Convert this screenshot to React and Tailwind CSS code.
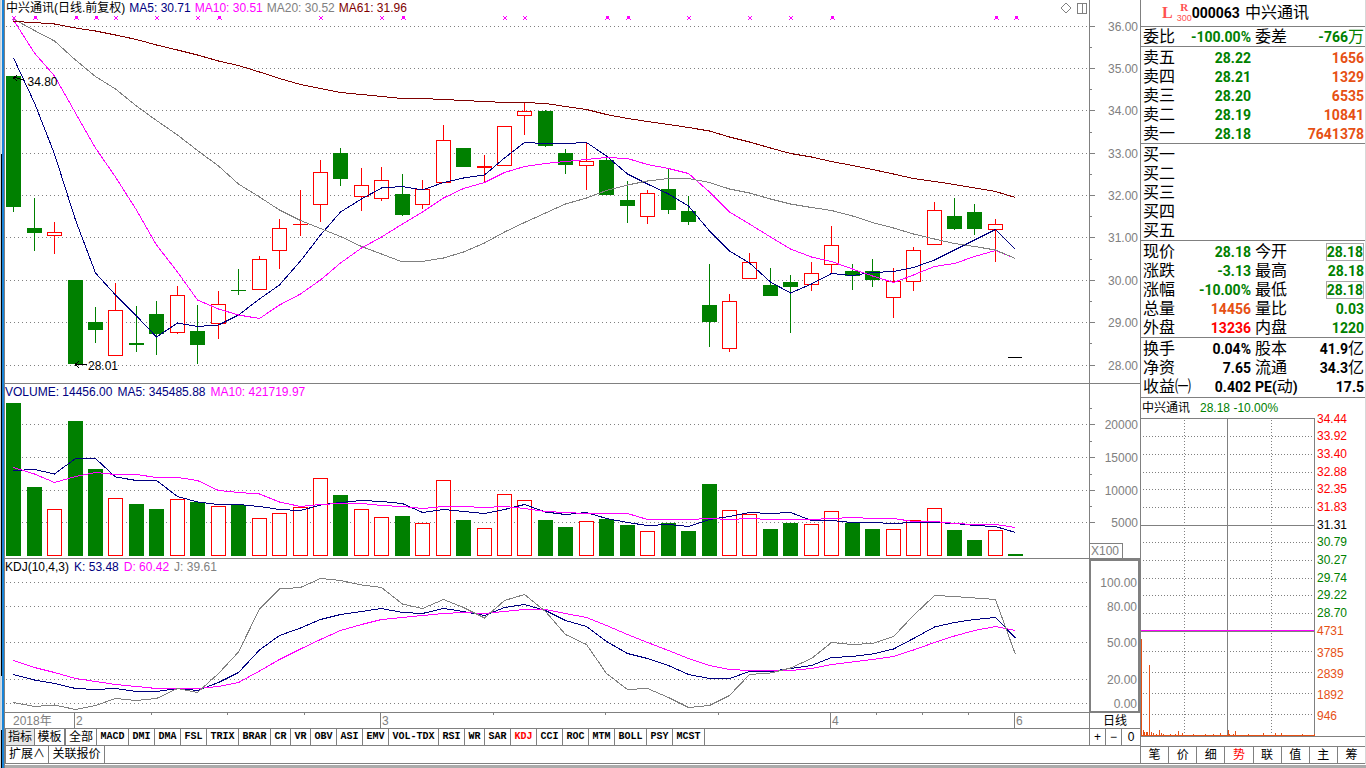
import React from "react";

/* ---------- data ---------- */

const STEP = 20.452;
const xAt = (i) => Math.floor(13.68 + STEP * i);

// [direction, body top, body bottom, high, low]
const CANDLES = [
  ["d", 76, 207, 76, 212], ["d", 228, 233, 198, 251], ["u", 232, 236, 222, 254], ["d", 280, 364, 280, 364],
  ["d", 322, 330, 307, 343], ["u", 310, 356, 283, 356], ["d", 343, 345, 306, 352], ["d", 314, 334, 301, 355],
  ["u", 295, 333, 286, 334], ["d", 331, 345, 305, 364], ["u", 304, 324, 291, 339], ["d", 290, 291, 269, 295],
  ["u", 259, 290, 256, 290], ["u", 228, 251, 219, 269], ["u", 224, 225, 190, 236], ["u", 172, 205, 160, 222],
  ["d", 153, 179, 148, 186], ["u", 185, 197, 168, 211], ["u", 180, 199, 167, 201], ["d", 194, 215, 174, 216],
  ["u", 189, 205, 180, 209], ["u", 140, 183, 125, 183], ["d", 148, 167, 148, 167], ["u", 166, 168, 155, 182],
  ["u", 126, 166, 126, 166], ["u", 111, 116, 102, 135], ["d", 111, 146, 110, 147], ["d", 153, 165, 149, 174],
  ["u", 161, 166, 143, 190], ["d", 160, 195, 156, 195], ["d", 200, 206, 181, 223], ["u", 193, 217, 190, 224],
  ["d", 189, 210, 169, 214], ["d", 211, 222, 196, 225], ["d", 305, 322, 264, 347], ["u", 301, 349, 294, 352],
  ["u", 262, 279, 253, 279], ["d", 285, 296, 268, 296], ["d", 282, 287, 275, 333], ["u", 273, 285, 262, 291],
  ["u", 245, 265, 226, 274], ["d", 271, 276, 264, 290], ["d", 271, 280, 259, 287], ["u", 281, 298, 268, 318],
  ["u", 250, 282, 247, 291], ["u", 210, 245, 202, 245], ["d", 216, 229, 198, 230], ["d", 212, 229, 204, 235],
  ["u", 224, 230, 219, 262], ["flat", 357, 358, 357, 358],
];

const VOLUME_TOPS = [
  403, 487, 509, 421, 469, 498, 504, 509, 499, 502, 506, 505, 518, 513, 507, 478, 495, 509, 517, 516,
  523, 480, 520, 528, 494, 500, 520, 527, 521, 519, 525, 531, 523, 531, 484, 510, 514, 529, 523, 524,
  511, 523, 529, 529, 520, 508, 530, 540, 530, 554,
];

const MA5 = [58, 103, 154, 220, 273, 295, 316, 337, 323, 326.5, 325, 315, 299, 285, 261, 235, 212, 199, 188, 186.5, 190, 182.5, 178, 175, 158, 142.5, 143.5, 143.5, 142.5, 156, 174, 184, 194, 206, 231, 251, 263, 282, 293, 284, 273.5, 275.5, 272.5, 271.5, 267.5, 260, 250, 240, 229.5, 249.5];
const MA10 = [20, 53, 76, 113, 148, 177, 210, 245, 272, 300, 309, 315, 318.5, 305, 294, 280, 263, 248, 237, 224, 212, 198, 188.5, 182.5, 172.5, 166.5, 163.5, 161.5, 159.5, 157.5, 158.5, 164.5, 168.5, 173.5, 192, 212, 224, 237, 249, 257, 261.5, 269, 276, 282.5, 275, 266.5, 263.5, 256.5, 250.5, 258.5];
const MA20 = [19, 30.5, 41, 60, 76.5, 89, 106, 120.5, 135, 150.5, 166, 184, 197, 210, 220.5, 228.5, 236.5, 246.5, 254, 262, 261.5, 258, 252, 243, 232, 222.5, 213, 204, 198, 190.5, 185, 181, 178.5, 178.5, 182.5, 189, 193, 199, 204, 207.5, 210.5, 216, 222.5, 228, 234, 239, 243.5, 246.5, 250, 258.5];
const MA61 = [21.5, 22.5, 24, 28, 31, 35, 39.5, 45, 50, 55, 61, 65.5, 72, 78.5, 84.5, 88.5, 92.5, 94.5, 96.5, 98.5, 98.5, 99.5, 100.5, 101.5, 102.5, 102.5, 103.5, 106.5, 109.5, 114.5, 118.5, 121.5, 124.5, 127.5, 131, 137, 142, 148, 153.5, 157, 161.5, 165.5, 169.5, 174, 178.5, 181.5, 184.5, 188, 191.5, 197.5];

const VMA5 = [470.5, 469.5, 474, 458.5, 458.5, 477, 480.5, 480.5, 496.5, 502, 504.5, 504.5, 506.5, 509.5, 510.5, 505, 502.5, 500.5, 501.5, 503.5, 512.5, 509.5, 511.5, 513.5, 509.5, 504.5, 512, 514.5, 512.5, 518.5, 522.5, 525.5, 524.5, 526.5, 519.5, 516.5, 512.5, 513.5, 512.5, 520.5, 520.5, 522.5, 522.5, 523.5, 522.5, 522.5, 523.5, 525.5, 526.5, 532.5];
const VMA10 = [467.5, 474, 482.5, 476.5, 472.5, 474.5, 474.5, 477.5, 477.5, 480.5, 490.5, 492.5, 494, 502, 506.5, 504.5, 503.5, 503.5, 505.5, 506.5, 508.5, 506.5, 506.5, 507.5, 506.5, 508.5, 511.5, 512.5, 513.5, 513.5, 513.5, 519.5, 519.5, 519.5, 518.5, 519.5, 518.5, 519.5, 519.5, 519.5, 518.5, 517.5, 518.5, 518.5, 521.5, 521.5, 523.5, 524.5, 524.5, 527.5];

const LINE_K = [674.5, 680, 683.5, 688.5, 689.5, 688.5, 691.5, 691.5, 688.5, 690.5, 682.5, 672.5, 650, 635.5, 628, 619.5, 614.5, 611.5, 608.5, 612.5, 613.5, 608.5, 611.5, 615.5, 607.5, 604.5, 610.5, 620.5, 626.5, 641.5, 653.5, 658.5, 665.5, 674.5, 678.5, 678.5, 671.5, 671.5, 668.5, 665.5, 657.5, 656.5, 654, 649, 638.5, 627, 622.5, 619.5, 617.5, 638];
const LINE_D = [660.5, 667.5, 672.5, 678.5, 681.5, 684.5, 686.5, 688.5, 688.5, 688.5, 686.5, 682.5, 671, 659.5, 649, 639.5, 630.5, 624.5, 619.5, 617.5, 615.5, 613.5, 612.5, 613.5, 611.5, 609.5, 609.5, 613.5, 617.5, 625.5, 634.5, 642.5, 650.5, 658.5, 665.5, 669.5, 670.5, 670.5, 670.5, 668.5, 664.5, 662, 659.5, 656.5, 650, 642.5, 636, 630.5, 626.5, 630.5];
const LINE_J = [702.5, 706.5, 705, 709.5, 705.5, 698.5, 700.5, 698.5, 688.5, 692.5, 673.5, 652, 609, 589, 587.5, 578.5, 580.5, 585, 587.5, 604, 608.5, 599.5, 607.5, 618, 600.5, 594.5, 611.5, 634.5, 644.5, 673.5, 689.5, 688.5, 697.5, 707.5, 705.5, 695.5, 674.5, 673, 668, 658.5, 642.5, 644.5, 643.5, 636.5, 615.5, 595.5, 596.5, 598, 599.5, 654.5];

const SMALL_MARKS = [0, 5, 7, 9, 15, 18, 24, 25, 33, 36, 38];
const LARGE_MARKS = [1, 3, 4, 10, 19, 29, 30, 40, 48, 49];

const PRICE_TICKS = [
  [26, "36.00"], [68, "35.00"], [110, "34.00"], [153, "33.00"], [195, "32.00"],
  [237, "31.00"], [280, "30.00"], [322, "29.00"], [365, "28.00"],
];
const VOLUME_TICKS = [[424, "20000"], [457, "15000"], [490, "10000"], [522, "5000"]];
const KDJ_TICKS = [[582, "100.00"], [606, "80.00"], [642, "50.00"], [679, "20.00"], [703, "0.00"]];

const GREEN = "#008000";
const RED = "#ff0000";
const NAVY = "#000080";
const MAGENTA = "#ff00ff";
const GRAY = "#808080";
const MAROON = "#800000";

const pct = (y, top, height) => `${((y - top) / height) * 100}%`;

/* ---------- chart pieces ---------- */

function Plot({ top, height, label, children, overlay }) {
  return (
    <svg className="block min-h-0 w-full flex-1" role="img" aria-label={label}>
      <svg
        width="100%"
        height="100%"
        viewBox={`5 ${top} 1084 ${height}`}
        preserveAspectRatio="none"
        shapeRendering="crispEdges"
      >
        {children}
      </svg>
      {overlay}
    </svg>
  );
}

function Grid({ rows }) {
  return rows.map(([y]) => (
    <line key={y} x1="6" x2="1088" y1={y + 0.5} y2={y + 0.5} stroke={GRAY} strokeDasharray="1 3" />
  ));
}

function Line({ values, color }) {
  const points = values.map((y, i) => `${xAt(i) + 0.5},${y}`).join(" ");
  return <polyline points={points} fill="none" stroke={color} strokeWidth="1" />;
}

function Bar({ x, top, bottom, up }) {
  if (up && bottom - top > 2) {
    return (
      <rect x={x - 6.5} y={top + 0.5} width="14" height={bottom - top - 1} fill="#fff" stroke={RED} />
    );
  }
  return <rect x={x - 7} y={top} width="15" height={bottom - top} fill={up ? RED : GREEN} />;
}

function Candle({ i, c: [dir, top, bottom, high, low] }) {
  const x = xAt(i);
  if (dir === "flat") return <rect x={x - 7} y={top} width="14" height="1" fill="#000" />;
  return (
    <g>
      <rect x={x} y={high} width="1" height={low - high} fill={dir === "u" ? RED : GREEN} />
      <Bar x={x} top={top} bottom={bottom} up={dir === "u"} />
    </g>
  );
}

function Mark({ x, large }) {
  return (
    <g>
      <path
        d={large ? `M${x - 1} 15l5 5m0 -5l-5 5` : `M${x - 1} 16l4 4m0 -4l-4 4`}
        stroke={MAGENTA}
        fill="none"
      />
      {large && <rect x={x} y="16" width="3" height="3" fill={MAGENTA} />}
    </g>
  );
}

function AxisScale({ ticks, top, height, minor = [], right = 48, marks = true }) {
  return (
    <svg className="block min-h-0 w-full flex-1 overflow-visible" shapeRendering="crispEdges">
      {marks && minor.map((y) => (
        <rect key={y} x="0" y={pct(y, top, height)} width="2" height="1" fill={GRAY} />
      ))}
      {ticks.map(([y, text]) => (
        <g key={y}>
          {marks && <rect x="0" y={pct(y, top, height)} width="5" height="1" fill={GRAY} />}
          <text
            x={right}
            y={pct(y, top, height)}
            dy="5"
            textAnchor="end"
            className="fill-[#808080] text-[12px]"
          >
            {text}
          </text>
        </g>
      ))}
    </svg>
  );
}

function Legend({ items, gap = "gap-[5px]", children }) {
  return (
    <header className={`${gap} flex h-4 shrink-0 items-center whitespace-nowrap text-[12px] leading-4`}>
      {items.map(([text, color]) => (
        <span key={text} className={color}>{text}</span>
      ))}
      {children}
    </header>
  );
}

function PricePanel() {
  const top = 16;
  const h = 367;
  return (
    <section className="grid min-h-0 grid-cols-[minmax(0,1fr)_51px] border-b border-[#808080]">
      <div className="flex min-h-0 flex-col">
        <Legend
          gap="gap-1"
          items={[
            ["中兴通讯(日线.前复权)", "pl-px text-black"],
            ["MA5: 30.71", "text-[#000080]"],
            ["MA10: 30.51", "text-[#ff00ff]"],
            ["MA20: 30.52", "text-[#808080]"],
            ["MA61: 31.96", "text-[#800000]"],
          ]}
        >
          <span className="flex-1" />
          <button type="button" aria-label="标记" className="h-3 w-3">
            <svg viewBox="0 0 12 12" className="block h-3 w-3">
              <path d="M6 1L11 6L6 11L1 6Z" fill="none" stroke={GRAY} />
            </svg>
          </button>
          <button type="button" aria-label="分栏" className="mr-px h-3 w-3">
            <svg viewBox="0 0 12 12" className="block h-3 w-3" shapeRendering="crispEdges">
              <path d="M1.5 1.5H10.5V11.5H1.5ZM6.5 1.5V11.5" fill="none" stroke={GRAY} />
            </svg>
          </button>
        </Legend>
        <Plot
          top={top}
          height={h}
          label="日线"
          overlay={
            <g className="text-[12px]">
              <text x={pct(27.5, 5, 1084)} y={pct(86, top, h)}>34.80</text>
              <text x={pct(88, 5, 1084)} y={pct(370, top, h)}>28.01</text>
            </g>
          }
        >
          <Grid rows={PRICE_TICKS} />
          {SMALL_MARKS.map((i) => <Mark key={i} x={xAt(i)} />)}
          {LARGE_MARKS.map((i) => <Mark key={i} x={xAt(i)} large />)}
          {CANDLES.map((c, i) => <Candle key={i} i={i} c={c} />)}
          <Line values={MA5} color={NAVY} />
          <Line values={MA10} color={MAGENTA} />
          <Line values={MA20} color={GRAY} />
          <Line values={MA61} color={MAROON} />
          <path d="M13 77.5H17M17 78.5H20M20 79.5H24M13 77.5L17 75.5M13 77.5L17 80.5" stroke="#000" fill="none" />
          <path d="M75 364.5H87M75 364.5L79 361.5M75 364.5L79 367.5" stroke="#000" fill="none" />
        </Plot>
      </div>
      <div className="flex min-h-0 flex-col border-l border-[#808080]">
        <AxisScale ticks={PRICE_TICKS} minor={[47, 89, 132, 174, 216, 259, 301, 343]} top={0} height={383} />
      </div>
    </section>
  );
}

function VolumePanel() {
  return (
    <section className="grid min-h-0 grid-cols-[minmax(0,1fr)_51px] border-b border-[#808080]">
      <div className="flex min-h-0 flex-col">
        <Legend
          items={[
            ["VOLUME: 14456.00", "text-[#000080]"],
            ["MA5: 345485.88", "text-[#000080]"],
            ["MA10: 421719.97", "text-[#ff00ff]"],
          ]}
        />
        <Plot top={400} height={158} label="成交量">
          <Grid rows={VOLUME_TICKS} />
          {VOLUME_TOPS.map((y, i) => (
            <Bar key={i} x={xAt(i)} top={y} bottom={556} up={CANDLES[i][0] === "u"} />
          ))}
          <Line values={VMA5} color={NAVY} />
          <Line values={VMA10} color={MAGENTA} />
        </Plot>
      </div>
      <div className="flex min-h-0 flex-col border-l border-[#808080]">
        <AxisScale ticks={VOLUME_TICKS} minor={[408, 441, 474, 506]} top={384} height={159} />
        <div className="h-[15px] w-[33px] border border-b-0 border-l-0 border-[#808080] pl-px text-[12px] leading-[15px] text-[#808080]">
          X100
        </div>
      </div>
    </section>
  );
}

function KdjPanel() {
  return (
    <section className="grid min-h-0 grid-cols-[minmax(0,1fr)_51px]">
      <div className="flex min-h-0 flex-col">
        <Legend
          items={[
            ["KDJ(10,4,3)", "text-black"],
            ["K: 53.48", "text-[#000080]"],
            ["D: 60.42", "text-[#ff00ff]"],
            ["J: 39.61", "text-[#808080]"],
          ]}
        />
        <Plot top={575} height={137} label="KDJ">
          <Grid rows={KDJ_TICKS} />
          <Line values={LINE_K} color={NAVY} />
          <Line values={LINE_D} color={MAGENTA} />
          <Line values={LINE_J} color={GRAY} />
        </Plot>
      </div>
      <div className="flex min-h-0 flex-col border-2 border-b border-[#808080]">
        <AxisScale ticks={KDJ_TICKS} top={561} height={150} right={46} marks={false} />
      </div>
    </section>
  );
}

function TimeAxis() {
  const months = [[74, "2"], [380, "3"], [830, "4"], [1014, "6"]];
  const ticks = [151, 227, 304, 493, 605, 718, 876, 922, 968];
  return (
    <div className="grid h-4 shrink-0 grid-cols-[minmax(0,1fr)_51px] border-t border-[#808080]">
      <svg className="block h-[15px] w-full" shapeRendering="crispEdges">
        <text x="8" y="12" className="fill-[#808080] text-[12px]">2018年</text>
        {months.map(([x, text]) => (
          <g key={x}>
            <rect x={pct(x, 5, 1084)} y="0" width="1" height="15" fill={GRAY} />
            <text x={pct(x + 2, 5, 1084)} y="12" className="fill-[#808080] text-[12px]">{text}</text>
          </g>
        ))}
        {ticks.map((x) => (
          <rect key={x} x={pct(x, 5, 1084)} y="0" width="1" height="2" fill={GRAY} />
        ))}
      </svg>
      <button type="button" className="border-l border-[#808080] text-center text-[12px] leading-[14px]">日线</button>
    </div>
  );
}

const INDICATORS = [
  ["MACD", "w-8"], ["DMI", "w-[26px]"], ["DMA", "w-[26px]"], ["FSL", "w-[26px]"], ["TRIX", "w-8"],
  ["BRAR", "w-8"], ["CR", "w-5"], ["VR", "w-5"], ["OBV", "w-[26px]"], ["ASI", "w-[26px]"],
  ["EMV", "w-[26px]"], ["VOL-TDX", "w-[50px]"], ["RSI", "w-[26px]"], ["WR", "w-5"], ["SAR", "w-[26px]"],
  ["KDJ", "w-[26px]"], ["CCI", "w-[26px]"], ["ROC", "w-[26px]"], ["MTM", "w-[26px]"], ["BOLL", "w-8"],
  ["PSY", "w-[26px]"], ["MCST", "w-8"],
];

function IndicatorBar() {
  return (
    <>
      <nav className="flex h-[17px] shrink-0 border-t border-[#808080] text-[12px] leading-4">
        <button type="button" className="w-[30px] border-x border-[#808080] bg-[#e8e8e8]">指标</button>
        <button type="button" className="w-[31px] border-r-2 border-[#808080]">模板</button>
        <button type="button" className="w-[31px] border-r border-[#808080]">全部</button>
        {INDICATORS.map(([name, width]) => (
          <button
            key={name}
            type="button"
            className={`${width} flex items-center justify-center border-r border-[#808080] font-['Liberation_Mono',monospace] text-[10px] font-bold ${
              name === "KDJ" ? "text-[#ff0000]" : "text-black"
            }`}
          >
            {name}
          </button>
        ))}
        <span className="flex-1" />
        <button type="button" aria-label="放大" className="w-4 border-l border-[#808080]">+</button>
        <button type="button" aria-label="缩小" className="w-4 border-l border-[#808080]">−</button>
        <button type="button" className="w-[19px] border-l border-[#808080]">0</button>
      </nav>
      <nav className="flex h-[19px] shrink-0 border-y border-[#808080] text-[12px] leading-[17px]">
        <button type="button" className="w-11 whitespace-nowrap border-x border-[#808080]">扩展∧</button>
        <button type="button" className="w-14 whitespace-nowrap border-r border-[#808080]">关联报价</button>
      </nav>
    </>
  );
}

/* ---------- quote panel ---------- */

const G = "text-[#008000]";
const O = "text-[#e65014]";
const R = "text-[#ff0000]";
const K = "text-black";

const SELLS = [
  ["卖五", "28.22", "1656"], ["卖四", "28.21", "1329"], ["卖三", "28.20", "6535"],
  ["卖二", "28.19", "10841"], ["卖一", "28.18", "7641378"],
];
const BUYS = [["买一", "", ""], ["买二", "", ""], ["买三", "", ""], ["买四", "", ""], ["买五", "", ""]];
const STATS = [
  ["现价", "28.18", G, "今开", "28.18", G, true],
  ["涨跌", "-3.13", G, "最高", "28.18", G],
  ["涨幅", "-10.00%", G, "最低", "28.18", G, true],
  ["总量", "14456", O, "量比", "0.03", G],
  ["外盘", "13236", R, "内盘", "1220", G],
];
const BASICS = [
  ["换手", "0.04%", K, "股本", "41.9亿", K],
  ["净资", "7.65", K, "流通", "34.3亿", K],
  ["收益㈠", "0.402", K, "PE(动)", "17.5", K],
];

const LABEL = "p-0 text-left align-middle text-[16px] font-normal leading-[18px] whitespace-nowrap";
const VALUE =
  "p-0 text-right align-middle font-[Roboto,'Noto_Sans_CJK_SC',sans-serif] text-[14px] font-bold leading-[18px] whitespace-nowrap";

function OrderTable({ rows }) {
  return (
    <table className="w-full table-fixed border-collapse">
      <tbody>
        {rows.map(([name, price, amount]) => (
          <tr key={name} className="h-[19px]">
            <th scope="row" className={`${LABEL} w-12`}>{name}</th>
            <td className={`${VALUE} ${G} w-[60px]`}>{price}</td>
            <td className={`${VALUE} ${O}`}>{amount}</td>
          </tr>
        ))}
      </tbody>
    </table>
  );
}

// "亿" and "万" are set in the thin label face, larger than the digits beside them
function Amount({ text }) {
  const m = text.match(/^(.*?)([亿万])$/);
  if (!m) return text;
  return (
    <>
      {m[1]}
      <span className="text-[16px] font-normal leading-none">{m[2]}</span>
    </>
  );
}

function StatName({ text }) {
  if (!text.startsWith("PE")) return text;
  return (
    <span className="font-[Roboto,'Noto_Sans_CJK_SC',sans-serif] text-[14px] font-bold leading-none">
      PE(<span className="text-[16px] font-normal leading-none">动</span>)
    </span>
  );
}

function StatTable({ rows }) {
  return (
    <table className="w-full table-fixed border-collapse">
      <tbody>
        {rows.map(([a, av, ac, b, bv, bc, boxed]) => (
          <tr key={a} className="h-[19px]">
            <th scope="row" className={`${LABEL} w-[46px]`}>{a}</th>
            <td className={`${VALUE} ${ac} w-[62px]`}>{av}</td>
            <th scope="row" className={`${LABEL} w-12`}>
              <span className="pl-1"><StatName text={b} /></span>
            </th>
            <td className={`${VALUE} ${bc}`}>
              {boxed ? (
                <span className="inline-block h-[18px] border border-[#a8a8a8] leading-4">{bv}</span>
              ) : (
                <Amount text={bv} />
              )}
            </td>
          </tr>
        ))}
      </tbody>
    </table>
  );
}

const MINI_LABELS = [
  [419, "34.44", RED], [436, "33.92", RED], [454, "33.40", RED], [472, "32.88", RED], [489, "32.35", RED],
  [507, "31.83", RED], [525, "31.31", "#000000"], [542, "30.79", GREEN], [560, "30.27", GREEN],
  [578, "29.74", GREEN], [595, "29.22", GREEN], [613, "28.70", GREEN],
  [631, "4731", "#e65014"], [653, "3785", "#e65014"], [674, "2839", "#e65014"], [695, "1892", "#e65014"],
  [716, "946", "#e65014"],
];
// [x, height above the base line]
const MINI_BARS = [
  [1141, 97], [1143, 6], [1144, 4], [1146, 4], [1147, 4], [1149, 71], [1151, 4], [1153, 3], [1156, 2], [1159, 6],
  [1161, 3], [1163, 2], [1170, 2], [1175, 2], [1178, 5], [1182, 3], [1193, 2], [1205, 2], [1213, 2], [1220, 3],
  [1228, 6], [1229, 2], [1233, 2], [1235, 5], [1248, 2], [1263, 3], [1275, 3], [1281, 3], [1302, 2], [1314, 2],
];

function MiniChart() {
  const dotted = [436, 454, 472, 489, 507, 542, 560, 578, 595, 613, 651, 672, 693, 714];
  return (
    <div className="flex min-h-0 flex-1 border-b border-[#808080]">
      <svg
        className="block h-full min-w-0 flex-1"
        viewBox="1141 418 174 318"
        preserveAspectRatio="none"
        shapeRendering="crispEdges"
        role="img"
        aria-label="分时走势"
      >
        {dotted.map((y) => (
          <line key={y} x1="1143" x2="1313" y1={y + 0.5} y2={y + 0.5} stroke={GRAY} strokeDasharray="1 2" />
        ))}
        {[1184, 1271].map((x) => (
          <line key={x} x1={x + 0.5} x2={x + 0.5} y1="420" y2="735" stroke={GRAY} strokeDasharray="1 2" />
        ))}
        <path d="M1141 418.5H1315M1141 525.5H1315M1141 631.5H1315M1227.5 418V736M1314.5 418V736" stroke={GRAY} />
        <rect x="1141" y="630" width="173" height="1" fill={MAGENTA} />
        <rect x="1141" y="735" width="173" height="1" fill="#e65014" />
        {MINI_BARS.map(([x, h]) => (
          <rect key={x} x={x} y={736 - h} width="1" height={h} fill="#e65014" />
        ))}
      </svg>
      <svg className="block h-full w-[50px] shrink-0 overflow-visible">
        {MINI_LABELS.map(([y, text, color]) => (
          <text key={text} x="2" y={pct(y, 418, 318)} dy="4" fill={color} className="text-[12px]">{text}</text>
        ))}
      </svg>
    </div>
  );
}

function QuotePanel() {
  const tabs = ["笔", "价", "细", "势", "联", "值", "主", "筹"];
  const block = "border-b border-[#808080] pl-[2px] pr-px";
  return (
    <aside className="flex w-[226px] shrink-0 flex-col border-l border-r border-l-[#808080] border-r-[#d8d8d8]">
      <h1 className="flex h-[27px] shrink-0 items-center border-b border-[#808080] pl-[21px] font-normal">
        <span className="mr-1 font-['Liberation_Serif',serif] text-[16px] font-bold text-[#ff5050]">L</span>
        <span className="flex flex-col items-center text-[#ff5050]">
          <span className="font-['Liberation_Serif',serif] text-[11px] font-bold leading-[11px]">R</span>
          <span className="text-[9px] leading-[11px]">300</span>
        </span>
        <span className="mr-[5px] font-[Roboto,sans-serif] text-[14px] font-bold">000063</span>
        <span className="text-[16px]">中兴通讯</span>
      </h1>
      <div className={`${block} h-5 shrink-0`}>
        <StatTable rows={[["委比", "-100.00%", G, "委差", "-766万", G]]} />
      </div>
      <div className={`${block} pt-px`}><OrderTable rows={SELLS} /></div>
      <div className={`${block} pt-px`}><OrderTable rows={BUYS} /></div>
      <div className={`${block} pt-px`}><StatTable rows={STATS} /></div>
      <div className={`${block} py-px`}><StatTable rows={BASICS} /></div>
      <h2 className="flex h-5 shrink-0 items-center gap-[10px] pl-px text-[12px]">
        <span>中兴通讯</span>
        <span className={G}>28.18 -10.00%</span>
      </h2>
      <MiniChart />
      <nav className="mt-[9px] flex h-[18px] shrink-0 border-y border-[#808080] text-[12px] leading-4">
        {tabs.map((t) => (
          <button
            key={t}
            type="button"
            className={`flex-1 border-r border-[#808080] last:border-r-0 ${t === "势" ? R : K}`}
          >
            {t}
          </button>
        ))}
      </nav>
    </aside>
  );
}

function WindowEdge() {
  return (
    <div className="flex w-[5px] shrink-0">
      <div className="w-px bg-[#c9d3dc]" />
      <div className="flex w-px flex-col">
        <div className="h-[20%] bg-[#e4e6e8]" />
        <div className="h-[68%] bg-black" />
        <div className="h-[7%] bg-[#d5dde5]" />
        <div className="flex-1 bg-black" />
      </div>
      <div className="w-[2px] bg-[#1883d7]" />
      <div className="w-px bg-[#808080]" />
    </div>
  );
}

export default function App() {
  return (
    <div className="flex h-screen min-h-[680px] bg-white font-['Liberation_Sans','Noto_Sans_CJK_SC',sans-serif] text-black">
      <WindowEdge />
      <div className="flex min-w-0 flex-1 flex-col">
        <div className="flex min-h-0 flex-1">
          <main className="flex min-w-0 flex-1 flex-col">
            <div className="grid min-h-0 flex-1 grid-rows-[minmax(0,384fr)_minmax(0,175fr)_minmax(0,153fr)]">
              <PricePanel />
              <VolumePanel />
              <KdjPanel />
            </div>
            <TimeAxis />
            <IndicatorBar />
          </main>
          <QuotePanel />
        </div>
        <div className="mt-px h-[3px] shrink-0 bg-[#ababab]" />
      </div>
    </div>
  );
}
